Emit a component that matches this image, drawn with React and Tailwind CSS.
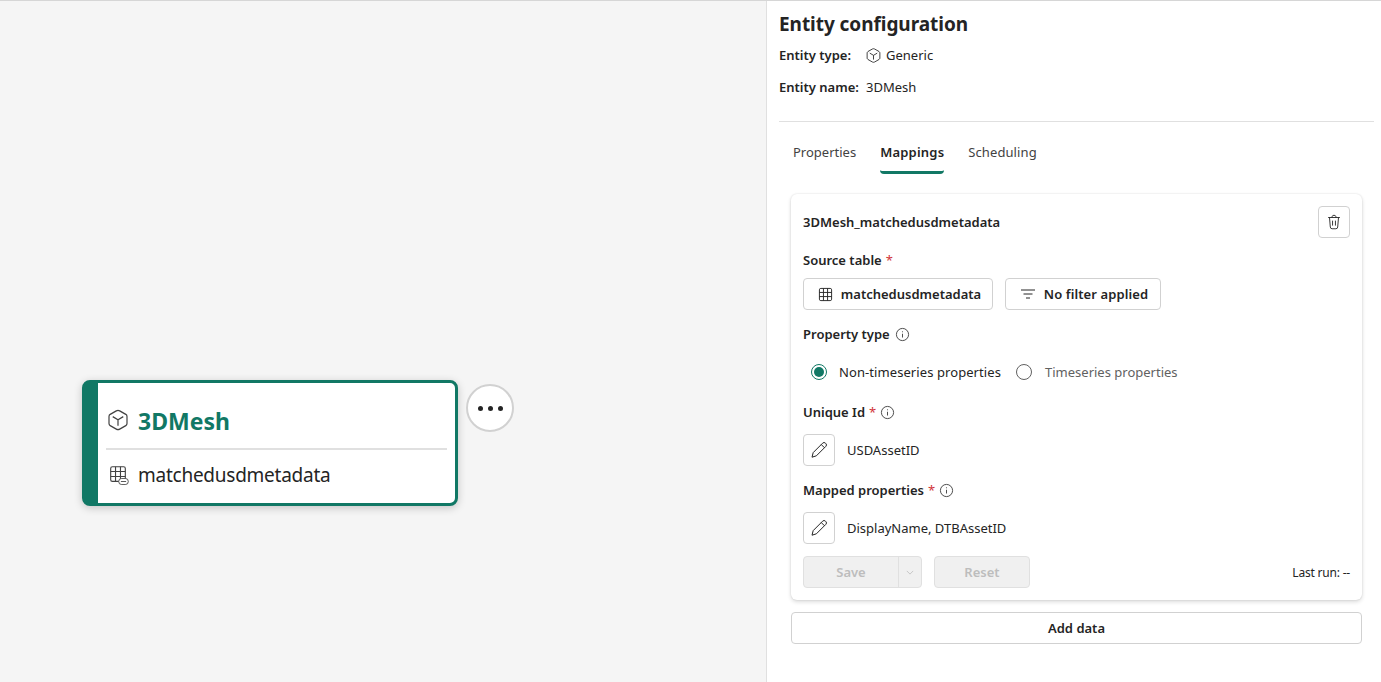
const Cube = ({ className = "" }) => (
  <svg viewBox="0 0 20 20" fill="none" stroke="currentColor" strokeWidth="1" className={className}>
    <path d="M8.6 2.4a2.8 2.8 0 0 1 2.8 0l5.1 2.9c.6.4 1 1 1 1.7v6c0 .7-.4 1.3-1 1.7l-5.1 2.9a2.8 2.8 0 0 1-2.8 0l-5.1-2.9c-.6-.4-1-1-1-1.7V7c0-.7.4-1.3 1-1.7z" />
    <path d="M5.6 7.2 10 9.8l4.4-2.6M10 9.8v5" />
  </svg>
);
const Info = () => (
  <svg viewBox="0 0 16 16" fill="none" stroke="currentColor" className="w-[15px] h-[15px] text-[#424242]">
    <circle cx="8" cy="8" r="6.5" />
    <path d="M8 7.2v4" />
    <circle cx="8" cy="5" r=".6" fill="currentColor" stroke="none" />
  </svg>
);
const Pencil = () => (
  <svg viewBox="0 0 20 20" fill="none" stroke="currentColor" className="w-5 h-5 text-[#242424]">
    <path d="M3 17.2 4.2 12.6 13.6 3.2a2 2 0 0 1 2.9 0l.3.3a2 2 0 0 1 0 2.9L7.4 15.8z" />
    <path d="M12.3 4.6 15.4 7.7" />
  </svg>
);
const Grid = ({ className = "" }) => (
  <svg viewBox="0 0 16 16" fill="none" stroke="currentColor" className={className}>
    <rect x="1.5" y="1.5" width="13" height="13" rx="1.5" />
    <path d="M1.5 5.8h13M1.5 10.2h13M5.8 1.5v13M10.2 1.5v13" />
  </svg>
);
const Req = () => <span className="text-[#d13438] ml-1 font-normal pt-[2px]">*</span>;
const Label = ({ children, req, info }) => (
  <div className="flex items-center h-5 text-[13px] font-semibold text-[#242424]">
    <span className="pt-[2px]">{children}</span>
    {req && <Req />}
    {info && <span className={req ? "ml-1 flex" : "ml-[5px] flex"}><Info /></span>}
  </div>
);
const OutlineBtn = ({ children, className = "" }) => (
  <div className={`flex items-center justify-center h-8 border border-[#d1d1d1] rounded bg-white text-[13px] font-semibold text-[#242424] ${className}`}>
    {children}
  </div>
);
const EditRow = ({ text }) => (
  <div className="flex items-center h-8">
    <div className="w-8 h-8 flex items-center justify-center border border-[#d1d1d1] rounded bg-white"><Pencil /></div>
    <span className="ml-3 pt-[2px] text-[13px] text-[#242424]">{text}</span>
  </div>
);

export default function App() {
  return (
    <div className="w-[1381px] h-[682px] flex overflow-hidden border-t border-[#d6d6d6] bg-white font-['Noto_Sans','Open_Sans',sans-serif]">
      <div className="relative w-[766px] bg-[#f5f5f5]">
        <div className="absolute left-[82px] top-[379px] w-[376px] h-[126px] flex rounded-lg border-[3px] border-[#117865] bg-white shadow-[0_2px_8px_rgba(0,0,0,0.2)]">
          <div className="w-[13px] bg-[#117865] shrink-0" />
          <div className="flex-1 px-[8px] flex flex-col">
            <div className="h-[67px] flex items-center pt-[11px] border-b-2 border-[#e0e0e0]">
              <Cube className="w-6 h-6 text-[#424242] mb-[2px] shrink-0" />
              <span className="ml-2 text-[23px] leading-[30px] font-bold text-[#117865]">3DMesh</span>
            </div>
            <div className="flex items-center h-[50px]">
              <div className="relative w-[23px] ml-[3px] h-5 -mt-[1px] shrink-0">
                <Grid className="w-[18px] h-[18px] text-[#424242]" />
                <svg viewBox="0 0 12 8" fill="white" stroke="#424242" className="absolute right-[3px] bottom-0 w-[11px] h-[7px]">
                  <rect x="0.5" y="0.5" width="11" height="7" rx="3.5" />
                  <path d="M3 4h6" />
                </svg>
              </div>
              <span className="ml-[6px] text-[19px] tracking-[-0.25px] text-[#242424]">matchedusdmetadata</span>
            </div>
          </div>
        </div>
        <div className="absolute left-[466px] top-[383px] w-12 h-12 rounded-full border-2 border-[#d1d1d1] bg-white flex items-center justify-center gap-[5px]">
          <span className="w-[5px] h-[5px] rounded-full bg-[#242424]" />
          <span className="w-[5px] h-[5px] rounded-full bg-[#242424]" />
          <span className="w-[5px] h-[5px] rounded-full bg-[#242424]" />
        </div>
      </div>

      <div className="flex-1 border-l border-[#e0e0e0] pl-3 pr-[7px] pt-[9px]">
        <div className="text-[19px] leading-7 font-bold tracking-[-0.05px] text-[#242424]">Entity configuration</div>
        <div className="mt-[7px] h-5 flex items-center text-[13px] text-[#242424]">
          <span className="font-semibold w-[87px] pt-[2px]">Entity type:</span>
          <Cube className="w-[17px] h-[17px] text-[#242424] -ml-[1px]" />
          <span className="ml-[4px] pt-[2px]">Generic</span>
        </div>
        <div className="mt-3 h-5 flex items-center text-[13px] text-[#242424]">
          <span className="font-semibold w-[87px] pt-[2px]">Entity name:</span>
          <span className="pt-[2px]">3DMesh</span>
        </div>
        <div className="mt-6 border-t border-[#e0e0e0]" />
        <div className="mt-[20px] flex pl-[14px] gap-6 text-[13px]">
          <div className="h-[32px] pt-[1px] text-[#424242]">Properties</div>
          <div className="h-[32px] pt-[1px] font-semibold tracking-[0.2px] text-[#242424] border-b-[3px] border-[#117865] rounded-b-sm">Mappings</div>
          <div className="h-[32px] pt-[1px] text-[#424242] tracking-[0.1px]">Scheduling</div>
        </div>
        <div className="ml-3 mr-3 mt-5 h-[406px] rounded-md bg-white px-3 shadow-[0_0_2px_rgba(0,0,0,0.12),0_2px_4px_rgba(0,0,0,0.14)] flex flex-col">
          <div className="flex items-center justify-between pt-3 h-[44px]">
            <span className="text-[13px] pt-[2px] font-semibold text-[#242424]">3DMesh_matchedusdmetadata</span>
            <div className="w-8 h-8 flex items-center justify-center border border-[#d1d1d1] rounded bg-white">
              <svg viewBox="0 0 20 20" fill="none" stroke="currentColor" className="w-[18px] h-[18px] text-[#242424]">
                <path d="M3.5 5h13M7.8 5V4.2A2.2 2.2 0 0 1 10 2.5a2.2 2.2 0 0 1 2.2 1.7V5M5 5l.9 10.6A2 2 0 0 0 7.9 17.5h4.2a2 2 0 0 0 2-1.9L15 5M8.4 8.5v5.5M11.6 8.5v5.5" />
              </svg>
            </div>
          </div>
          <div className="mt-[12px]"><Label req>Source table</Label></div>
          <div className="mt-2 flex gap-3">
            <OutlineBtn className="w-[190px] pl-[3px]">
              <Grid className="w-[15px] h-[15px] mr-[8px]" />
              <span className="pt-[2px]">matchedusdmetadata</span>
            </OutlineBtn>
            <OutlineBtn className="w-[156px] pl-[2px]">
              <svg viewBox="0 0 16 16" fill="none" stroke="currentColor" className="w-4 h-4 mr-2">
                <path d="M1 4h14M3.5 8h9M6 12h4" />
              </svg>
              <span className="pt-[2px] tracking-[0.1px]">No filter applied</span>
            </OutlineBtn>
          </div>
          <div className="mt-[14px]"><Label info>Property type</Label></div>
          <div className="mt-[18px] h-5 flex items-center text-[13px] pl-2">
            <span className="w-4 h-4 rounded-full border border-[#117865] flex items-center justify-center">
              <span className="w-[10px] h-[10px] rounded-full bg-[#117865]" />
            </span>
            <span className="ml-3 pt-[2px] tracking-[0.08px] text-[#242424]">Non-timeseries properties</span>
            <span className="ml-[15px] w-4 h-4 rounded-full border border-[#616161]" />
            <span className="ml-[13px] pt-[2px] text-[#616161]">Timeseries properties</span>
          </div>
          <div className="mt-[20px]"><Label req info>Unique Id</Label></div>
          <div className="mt-3"><EditRow text="USDAssetID" /></div>
          <div className="mt-[14px]"><Label req info>Mapped properties</Label></div>
          <div className="mt-3"><EditRow text="DisplayName, DTBAssetID" /></div>
          <div className="mt-3 flex items-center">
            <div className="w-[119px] h-8 flex rounded bg-[#f0f0f0] border border-[#e0e0e0] text-[13px] font-semibold text-[#bdbdbd]">
              <span className="w-[95px] pt-[2px] flex items-center justify-center border-r border-[#e0e0e0]">Save</span>
              <span className="flex-1 flex items-center justify-center">
                <svg viewBox="0 0 10 6" fill="none" stroke="#bdbdbd" className="w-2 h-[5px]"><path d="M1 1l4 4 4-4" /></svg>
              </span>
            </div>
            <div className="ml-3 w-[96px] h-8 pt-[2px] flex items-center justify-center rounded bg-[#f0f0f0] border border-[#e0e0e0] text-[13px] font-semibold text-[#bdbdbd]">Reset</div>
            <span className="ml-auto pt-[2px] text-[12px] tracking-[-0.2px] text-[#242424]">Last run: --</span>
          </div>
        </div>
        <div className="ml-3 mr-3 mt-3">
          <OutlineBtn className="w-full"><span className="pt-[2px]">Add data</span></OutlineBtn>
        </div>
      </div>
    </div>
  );
}
